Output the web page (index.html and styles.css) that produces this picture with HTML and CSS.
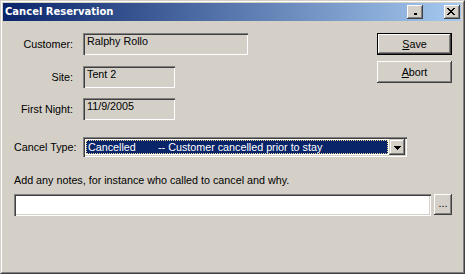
FILE: index.html
```html
<!DOCTYPE html>
<html>
<head>
<meta charset="utf-8">
<title>Cancel Reservation</title>
<link rel="stylesheet" href="styles.css">
</head>
<body>
<div class="window">
  <div class="frame">
    <div class="titlebar">
      <span class="title">Cancel Reservation</span>
      <div class="tbtns">
        <div class="tbtn">
          <svg width="16" height="14" viewBox="0 0 16 14" shape-rendering="crispEdges"><rect x="7" y="8" width="3" height="2" fill="#000"/></svg>
        </div>
        <div class="tbtn close">
          <svg width="16" height="14" viewBox="0 0 16 14" shape-rendering="crispEdges" fill="#000">
            <rect x="3" y="3" width="2" height="1"/><rect x="9" y="3" width="2" height="1"/>
            <rect x="4" y="4" width="2" height="1"/><rect x="8" y="4" width="2" height="1"/>
            <rect x="5" y="5" width="4" height="1"/>
            <rect x="6" y="6" width="2" height="1"/>
            <rect x="5" y="7" width="4" height="1"/>
            <rect x="4" y="8" width="2" height="1"/><rect x="8" y="8" width="2" height="1"/>
            <rect x="3" y="9" width="2" height="1"/><rect x="9" y="9" width="2" height="1"/>
          </svg>
        </div>
      </div>
    </div>
    <div class="body">
      <div class="top">
        <div class="fields">
          <div class="frow">
            <span class="lbl">Customer:</span>
            <div class="field disabled w-long">Ralphy Rollo</div>
          </div>
          <div class="frow r2">
            <span class="lbl">Site:</span>
            <div class="field disabled w-short">Tent 2</div>
          </div>
          <div class="frow r3">
            <span class="lbl">First Night:</span>
            <div class="field disabled w-short">11/9/2005</div>
          </div>
        </div>
        <div class="actions">
          <div class="btn default"><span class="btn-in"><u>S</u>ave</span></div>
          <div class="btn"><span class="btn-in"><u>A</u>bort</span></div>
        </div>
      </div>
      <div class="combo-row">
        <span class="lbl-left">Cancel Type:</span>
        <div class="combo">
          <div class="sel"><span class="sel-a">Cancelled</span><span>-- Customer cancelled prior to stay</span></div>
          <div class="ddbtn">
            <svg width="7" height="4" viewBox="0 0 7 4" shape-rendering="crispEdges" fill="#000">
              <rect x="0" y="0" width="7" height="1"/><rect x="1" y="1" width="5" height="1"/><rect x="2" y="2" width="3" height="1"/><rect x="3" y="3" width="1" height="1"/>
            </svg>
          </div>
        </div>
      </div>
      <div class="notes-label">Add any notes, for instance who called to cancel and why.</div>
      <div class="notes-row">
        <div class="field notes"></div>
        <div class="btn ell">...</div>
      </div>
    </div>
  </div>
</div>
</body>
</html>
```
FILE: styles.css
```css
html, body {
  margin: 0;
  padding: 0;
  background: #d4d0c8;
}
* { box-sizing: border-box; }

.window {
  width: 465px;
  height: 274px;
  border: 1px solid;
  border-color: #d4d0c8 #404040 #404040 #d4d0c8;
  background: #d4d0c8;
  font-family: "Liberation Sans", Arial, sans-serif;
  font-size: 10.75px;
  line-height: 13px;
  color: #000;
}
.frame {
  height: 100%;
  border: 1px solid;
  border-color: #fff #808080 #808080 #fff;
  padding: 1px 2px 2px 1px;
  display: flex;
  flex-direction: column;
}

.titlebar {
  height: 18px;
  flex: none;
  display: flex;
  align-items: center;
  justify-content: space-between;
  padding: 0 1px 0 2px;
  background: linear-gradient(to right, #0a246a, #a6caf0);
}
.title {
  font-family: "DejaVu Sans", sans-serif;
  font-weight: bold;
  font-size: 10px;
  line-height: 18px;
  color: #fff;
  white-space: nowrap;
}
.tbtns {
  display: flex;
  gap: 21px;
}
.tbtn {
  width: 16px;
  height: 14px;
  background: #d4d0c8;
  box-shadow: inset -1px -1px #404040, inset 1px 1px #fff, inset -2px -2px #808080, inset 2px 2px #d4d0c8;
}
.tbtn svg { display: block; }

.body {
  flex: 1;
  padding: 12px 9px 0 11px;
  display: flex;
  flex-direction: column;
}
.top {
  display: flex;
  align-items: flex-start;
}
.fields {
  display: flex;
  flex-direction: column;
  margin-left: -11px;
}
.frow {
  display: flex;
  align-items: center;
  height: 22px;
}
.frow.r2 { margin-top: 11px; }
.frow.r3 { margin-top: 10px; }
.lbl {
  width: 70px;
  text-align: right;
  margin-right: 10px;
  white-space: nowrap;
}
.field {
  height: 22px;
  padding: 2px 4px;
  white-space: nowrap;
  background: #fff;
  box-shadow: inset 1px 1px #808080, inset 2px 2px #404040, inset -1px -1px #fff, inset -2px -2px #d4d0c8;
}
.field.disabled { background: #d4d0c8; }
.w-long { width: 165px; }
.w-short { width: 92px; }

.actions {
  margin-left: auto;
  display: flex;
  flex-direction: column;
  gap: 6px;
}
.btn {
  width: 75px;
  height: 22px;
  display: flex;
  align-items: center;
  justify-content: center;
  background: #d4d0c8;
  box-shadow: inset -1px -1px #404040, inset 1px 1px #fff, inset -2px -2px #808080, inset 2px 2px #d4d0c8;
}
.btn.default {
  border: 1px solid #000;
  box-shadow: inset -1px -1px #404040, inset 1px 1px #fff, inset -2px -2px #808080;
}
.btn-in { line-height: 13px; }
.btn u { text-decoration: underline; text-underline-offset: 1px; }

.combo-row {
  display: flex;
  align-items: center;
  margin-top: 17px;
  height: 20px;
}
.lbl-left {
  width: 69px;
  white-space: nowrap;
}
.combo {
  width: 324px;
  height: 20px;
  padding: 2px;
  display: flex;
  background: #fff;
  box-shadow: inset 1px 1px #808080, inset 2px 2px #404040, inset -1px -1px #fff, inset -2px -2px #d4d0c8;
}
.sel {
  flex: 1;
  margin: 1px 1px 0 1px;
  height: 14px;
  background: #0a246a;
  color: #fff;
  border: 1px dotted #f5db95;
  padding-left: 1px;
  line-height: 12px;
  white-space: nowrap;
  overflow: hidden;
  display: flex;
}
.sel-a { width: 70px; }
.ddbtn {
  width: 16px;
  height: 16px;
  display: flex;
  align-items: center;
  justify-content: center;
  padding-top: 1px;
  background: #d4d0c8;
  box-shadow: inset -1px -1px #404040, inset 1px 1px #d4d0c8, inset -2px -2px #808080, inset 2px 2px #fff;
}
.ddbtn svg { display: block; }

.notes-label {
  margin-top: 17px;
  white-space: nowrap;
}
.notes-row {
  display: flex;
  align-items: flex-start;
  margin-top: 7px;
  gap: 3px;
}
.field.notes { width: 417px; }
.btn.ell {
  width: 18px;
  height: 21px;
  padding-bottom: 2px;
}
```
